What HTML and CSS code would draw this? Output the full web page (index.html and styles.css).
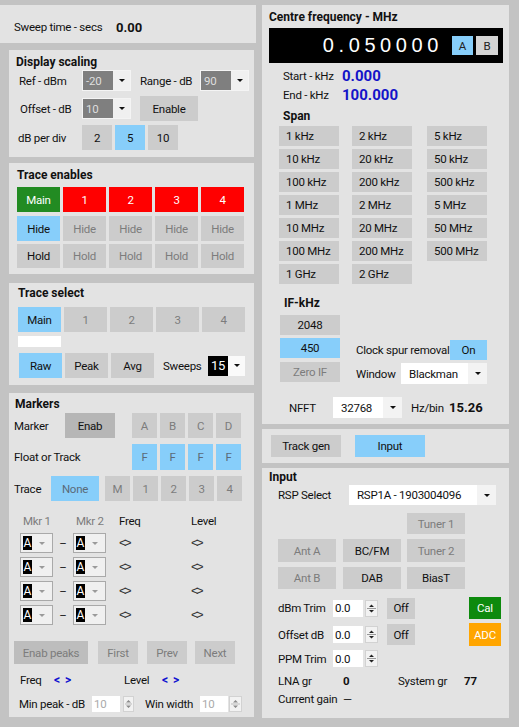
FILE: index.html
```html
<!DOCTYPE html>
<html>
<head>
<meta charset="utf-8">
<link rel="stylesheet" href="styles.css">
</head>
<body>
<div class="app">
  <div class="col left">
    <section class="panel sweep">
      <span class="lbl sweeplbl">Sweep time - secs</span><b class="sweepval">0.00</b>
    </section>

    <section class="panel sub disp">
      <div class="title">Display scaling</div>
      <div class="row d1">
        <span class="lbl w63">Ref - dBm</span>
        <span class="dd dark"><span class="ddtxt">-20</span><span class="ddbtn"><i class="arr"></i></span></span>
        <span class="lbl rng">Range - dB</span>
        <span class="dd dark"><span class="ddtxt">90</span><span class="ddbtn"><i class="arr"></i></span></span>
      </div>
      <div class="row d2">
        <span class="lbl w62">Offset - dB</span>
        <span class="dd dark"><span class="ddtxt">10</span><span class="ddbtn"><i class="arr"></i></span></span>
        <span class="btn enable">Enable</span>
      </div>
      <div class="row d3">
        <span class="lbl w64">dB per div</span>
        <span class="btn b30">2</span>
        <span class="btn b30 blue">5</span>
        <span class="btn b30">10</span>
      </div>
    </section>

    <section class="panel sub tenab">
      <div class="title">Trace enables</div>
      <div class="row trow">
        <span class="btn b43 green">Main</span>
        <span class="btn b43 red">1</span>
        <span class="btn b43 red">2</span>
        <span class="btn b43 red">3</span>
        <span class="btn b43 red">4</span>
      </div>
      <div class="row trow">
        <span class="btn b43 blue">Hide</span>
        <span class="btn b43 dis">Hide</span>
        <span class="btn b43 dis">Hide</span>
        <span class="btn b43 dis">Hide</span>
        <span class="btn b43 dis">Hide</span>
      </div>
      <div class="row trow">
        <span class="btn b43">Hold</span>
        <span class="btn b43 dis">Hold</span>
        <span class="btn b43 dis">Hold</span>
        <span class="btn b43 dis">Hold</span>
        <span class="btn b43 dis">Hold</span>
      </div>
    </section>

    <section class="panel sub tsel">
      <div class="title">Trace select</div>
      <div class="row srow">
        <span class="btn b43 blue">Main</span>
        <span class="btn b43 dis">1</span>
        <span class="btn b43 dis">2</span>
        <span class="btn b43 dis">3</span>
        <span class="btn b43 dis">4</span>
      </div>
      <div class="whitebox"></div>
      <div class="row rrow">
        <span class="btn b43 blue">Raw</span>
        <span class="btn b43">Peak</span>
        <span class="btn b43">Avg</span>
        <span class="lbl sweeps">Sweeps</span>
        <span class="dd blk"><span class="ddtxt">15</span><span class="ddbtn"><i class="arr"></i></span></span>
      </div>
    </section>

    <section class="panel sub mk">
      <div class="title">Markers</div>
      <div class="row m1">
        <span class="lbl w51">Marker</span>
        <span class="btn enab">Enab</span>
        <span class="btn b25 dis first">A</span>
        <span class="btn b25 dis">B</span>
        <span class="btn b25 dis">C</span>
        <span class="btn b25 dis">D</span>
      </div>
      <div class="row m2">
        <span class="lbl w118">Float or Track</span>
        <span class="btn b25 blue dis">F</span>
        <span class="btn b25 blue dis">F</span>
        <span class="btn b25 blue dis">F</span>
        <span class="btn b25 blue dis">F</span>
      </div>
      <div class="row m3">
        <span class="lbl w37">Trace</span>
        <span class="btn none blue dis">None</span>
        <span class="btn b25 dis mm">M</span>
        <span class="btn b25 dis">1</span>
        <span class="btn b25 dis">2</span>
        <span class="btn b25 dis">3</span>
        <span class="btn b25 dis">4</span>
      </div>
      <div class="row mhead">
        <span class="h1 dis">Mkr 1</span>
        <span class="h2 dis">Mkr 2</span>
        <span class="h3">Freq</span>
        <span class="h4">Level</span>
      </div>
      <div class="row mrow">
        <span class="mdd"><span class="mdtxt">A</span><i class="arr g"></i></span>
        <span class="dash">&ndash;</span>
        <span class="mdd"><span class="mdtxt">A</span><i class="arr g"></i></span>
        <span class="dia c1">&lt;&gt;</span>
        <span class="dia">&lt;&gt;</span>
      </div>
      <div class="row mrow">
        <span class="mdd"><span class="mdtxt">A</span><i class="arr g"></i></span>
        <span class="dash">&ndash;</span>
        <span class="mdd"><span class="mdtxt">A</span><i class="arr g"></i></span>
        <span class="dia c1">&lt;&gt;</span>
        <span class="dia">&lt;&gt;</span>
      </div>
      <div class="row mrow">
        <span class="mdd"><span class="mdtxt">A</span><i class="arr g"></i></span>
        <span class="dash">&ndash;</span>
        <span class="mdd"><span class="mdtxt">A</span><i class="arr g"></i></span>
        <span class="dia c1">&lt;&gt;</span>
        <span class="dia">&lt;&gt;</span>
      </div>
      <div class="row mrow">
        <span class="mdd"><span class="mdtxt">A</span><i class="arr g"></i></span>
        <span class="dash">&ndash;</span>
        <span class="mdd"><span class="mdtxt">A</span><i class="arr g"></i></span>
        <span class="dia c1">&lt;&gt;</span>
        <span class="dia">&lt;&gt;</span>
      </div>
      <div class="row prow">
        <span class="btn dark2 dis ep">Enab peaks</span>
        <span class="btn dis b40 pf">First</span>
        <span class="btn dis b40 pp">Prev</span>
        <span class="btn dis b40 pn">Next</span>
      </div>
      <div class="row frow">
        <span class="lbl w34">Freq</span>
        <span class="blu w70">&lt; &gt;</span>
        <span class="lbl w38">Level</span>
        <span class="blu">&lt; &gt;</span>
      </div>
      <div class="row minrow">
        <span class="lbl w73">Min peak - dB</span>
        <span class="num lt w28">10</span>
        <span class="spin s11"><svg width="9" height="14" viewBox="0 0 9 14"><path d="M2 5.5 L4.5 3 L7 5.5 Z M2 8.5 L4.5 11 L7 8.5 Z" fill="#8a8a8a"/><line x1="1" y1="7" x2="8" y2="7" stroke="#bbb"/></svg></span>
        <span class="lbl w55">Win width</span>
        <span class="num lt w28">10</span>
        <span class="spin s13"><svg width="11" height="14" viewBox="0 0 11 14"><path d="M3 5.5 L5.5 3 L8 5.5 Z M3 8.5 L5.5 11 L8 8.5 Z" fill="#8a8a8a"/><line x1="1" y1="7" x2="10" y2="7" stroke="#bbb"/></svg></span>
      </div>
    </section>
  </div>

  <div class="col right">
    <section class="panel cf">
      <div class="title">Centre frequency - MHz</div>
      <div class="freqbox">
        <span class="freq">0.050000</span>
        <span class="ab blue">A</span>
        <span class="ab bb">B</span>
      </div>
      <div class="row se">
        <span class="lbl w59">Start - kHz</span><b class="bval">0.000</b>
      </div>
      <div class="row se">
        <span class="lbl w59">End - kHz</span><b class="bval">100.000</b>
      </div>
      <div class="title span">Span</div>
      <div class="spangrid">
        <span class="sb">1 kHz</span><span class="sb">2 kHz</span><span class="sb">5 kHz</span>
        <span class="sb">10 kHz</span><span class="sb">20 kHz</span><span class="sb">50 kHz</span>
        <span class="sb blue">100 kHz</span><span class="sb">200 kHz</span><span class="sb">500 kHz</span>
        <span class="sb">1 MHz</span><span class="sb">2 MHz</span><span class="sb">5 MHz</span>
        <span class="sb">10 MHz</span><span class="sb">20 MHz</span><span class="sb">50 MHz</span>
        <span class="sb">100 MHz</span><span class="sb">200 MHz</span><span class="sb">500 MHz</span>
        <span class="sb">1 GHz</span><span class="sb">2 GHz</span>
      </div>
      <div class="title ifk">IF-kHz</div>
      <div class="ifblock">
        <div class="ifcol">
          <span class="btn ifb">2048</span>
          <span class="btn ifb blue i2">450</span>
          <span class="btn ifb dis i3">Zero IF</span>
        </div>
        <div class="ifright">
          <div class="row csr">
            <span class="lbl w94">Clock spur removal</span>
            <span class="btn on blue">On</span>
          </div>
          <div class="row win">
            <span class="lbl w45">Window</span>
            <span class="dd wht w86"><span class="ddtxt">Blackman</span><span class="ddbtn"><i class="arr"></i></span></span>
          </div>
        </div>
      </div>
      <div class="row nfft">
        <span class="lbl w44">NFFT</span>
        <span class="dd wht w69"><span class="ddtxt">32768</span><span class="ddbtn"><i class="arr"></i></span></span>
        <span class="lbl hzb">Hz/bin</span>
        <b class="bold13">15.26</b>
      </div>
    </section>

    <section class="panel tg">
      <span class="btn tgb">Track gen</span>
      <span class="btn tgb blue inp">Input</span>
    </section>

    <section class="panel inpanel">
      <div class="title">Input</div>
      <div class="row rsp">
        <span class="lbl w71">RSP Select</span>
        <span class="dd wht w147"><span class="ddtxt">RSP1A - 1903004096</span><span class="ddbtn"><i class="arr"></i></span></span>
      </div>
      <div class="row t1">
        <span class="btn b58 dis">Tuner 1</span>
      </div>
      <div class="row arow">
        <span class="btn b58 dis">Ant A</span>
        <span class="btn b58 g7">BC/FM</span>
        <span class="btn b58 dis g6">Tuner 2</span>
      </div>
      <div class="row brow">
        <span class="btn b58 dis">Ant B</span>
        <span class="btn b58 g7">DAB</span>
        <span class="btn b58 g6">BiasT</span>
      </div>
      <div class="row trim tr1">
        <span class="lbl w55">dBm Trim</span>
        <span class="num w30">0.0</span>
        <span class="spin s13b"><svg width="11" height="15" viewBox="0 0 11 15"><path d="M3 6 L5.5 3.5 L8 6 Z M3 9 L5.5 11.5 L8 9 Z" fill="#222"/><line x1="1" y1="7.5" x2="10" y2="7.5" stroke="#999"/></svg></span>
        <span class="btn off">Off</span>
        <span class="btn cal">Cal</span>
      </div>
      <div class="row trim tr2">
        <span class="lbl w55">Offset dB</span>
        <span class="num w30">0.0</span>
        <span class="spin s13b"><svg width="11" height="15" viewBox="0 0 11 15"><path d="M3 6 L5.5 3.5 L8 6 Z M3 9 L5.5 11.5 L8 9 Z" fill="#222"/><line x1="1" y1="7.5" x2="10" y2="7.5" stroke="#999"/></svg></span>
        <span class="btn off">Off</span>
        <span class="btn adc">ADC</span>
      </div>
      <div class="row trim tr3">
        <span class="lbl w55">PPM Trim</span>
        <span class="num w30">0.0</span>
        <span class="spin s13b"><svg width="11" height="15" viewBox="0 0 11 15"><path d="M3 6 L5.5 3.5 L8 6 Z M3 9 L5.5 11.5 L8 9 Z" fill="#222"/><line x1="1" y1="7.5" x2="10" y2="7.5" stroke="#999"/></svg></span>
      </div>
      <div class="row lna">
        <span class="lbl w65">LNA gr</span>
        <b class="w55b">0</b>
        <span class="lbl w66">System gr</span>
        <b>77</b>
      </div>
      <div class="row cg">
        <span class="lbl w65">Current gain</span>
        <span>&mdash;</span>
      </div>
    </section>
  </div>
</div>
</body>
</html>
```

FILE: styles.css
```css
* { box-sizing: border-box; }
html, body { margin: 0; padding: 0; }
body {
  width: 519px;
  height: 727px;
  background: #c3c3c3;
  font-family: Roboto, "Liberation Sans", Arial, sans-serif;
  font-size: 11.5px;
  letter-spacing: -0.25px;
  color: #111;
  overflow: hidden;
}
.app {
  display: grid;
  grid-template-columns: 256px 247px;
  column-gap: 6px;
  padding-top: 5px;
}
.col { display: flex; flex-direction: column; }
.panel { background: #e3e3e3; }
.sub { margin-left: 9px; width: 245px; }
.row { display: flex; align-items: center; }
.lbl { white-space: nowrap; flex: none; }
.title { font-weight: bold; height: 14px; line-height: 14px; font-size: 12px; letter-spacing: 0; }
b { font-weight: bold; letter-spacing: 0; }

.btn {
  display: flex; align-items: center; justify-content: center;
  background: #cccccc; color: #111; flex: none; white-space: nowrap;
}
.dis { color: #7c7c7c; }
.blue { background: #87cefa; }
.blue.dis { color: #5a6a78; }
.green { background: #228b22; color: #fff; }
.red { background: #ff0000; color: #fff; }

/* sweep */
.sweep { height: 38px; display: flex; align-items: center; padding: 6px 0 0 14px; }
.sweepval { margin-left: 17px; font-size: 13px; }
.sweeplbl { width: 85px; }

/* dropdowns */
.dd { display: flex; height: 21px; border: 1px solid #f4f4f4; flex: none; }
.dd .ddtxt { flex: 1; display: flex; align-items: center; padding-left: 3px; overflow: hidden; white-space: nowrap; }
.dd .ddbtn { width: 17px; background: #f0f0f0; display: flex; align-items: center; justify-content: center; flex: none; }
.arr { display: block; width: 0; height: 0; border-left: 3px solid transparent; border-right: 3px solid transparent; border-top: 3px solid #111; }
.arr.g { border-top-color: #9a9a9a; }
.dd.dark { width: 49px; }
.dd.dark .ddtxt { background: #7f7f7f; color: #dedede; }
.dd.blk { width: 37px; height: 20px; border: none; }
.dd.blk .ddtxt { background: #000; color: #fff; flex: none; width: 20px; padding-left: 3px; font-size: 13px; }
.dd.blk .ddbtn { background: #fafafa; }
.dd.wht { border: none; background: #fff; }
.dd.wht .ddtxt { padding-left: 8px; }
.dd.wht .ddbtn { background: #f3f3f3; width: 19px; }
.w86 { width: 86px; } .w69 { width: 69px; } .w147 { width: 147px; }

/* display scaling */
.disp { height: 107px; padding: 5px 0 0 7px; margin-top: 7px; }
.d1 { margin-top: 1px; height: 21px; padding-left: 3px; }
.w63 { width: 63px; }
.rng { margin-left: 9px; width: 60px; }
.d2 { margin-top: 5px; height: 25px; padding-left: 4px; }
.w62 { width: 62px; }
.enable { width: 58px; height: 25px; margin-left: 9px; }
.d3 { margin-top: 4px; height: 25px; padding-left: 2px; gap: 3px; }
.w64 { width: 64px; margin-right: -3px; }
.b30 { width: 30px; height: 25px; }

/* trace enables */
.tenab { height: 111px; margin-top: 6px; padding: 5px 0 0 8px; }
.trow { gap: 3px; height: 25px; margin-top: 4px; }
.trow:nth-of-type(2) { margin-top: 5px; }
.trow:last-child { margin-top: 3px; height: 24px; }
.trow:last-child .btn { height: 24px; }
.b43 { width: 43px; height: 25px; }

/* trace select */
.tsel { height: 102px; margin-top: 9px; padding: 3px 0 0 9px; }
.srow { gap: 3px; margin-top: 7px; }
.whitebox { width: 43px; height: 11px; background: #fff; margin-top: 4px; }
.rrow { gap: 3px; margin-top: 6px; padding-left: 1px; }
.sweeps { margin-left: 6px; width: 42px; }

/* markers */
.mk { height: 324px; margin-top: 8px; padding: 4px 0 0 5px; }
.mk .title { padding-left: 1px; }
.m1 { margin-top: 2px; height: 25px; }
.w51 { width: 51px; }
.enab { width: 50px; height: 25px; background: #b6b6b6; }
.b25 { width: 25px; height: 25px; margin-left: 3px; }
.m1 .first { margin-left: 17px; }
.m2 { margin-top: 6px; height: 26px; }
.m2 .b25 { height: 26px; }
.w118 { width: 115px; }
.m3 { margin-top: 6px; height: 25px; }
.w37 { width: 37px; }
.none { width: 48px; height: 25px; }
.m3 .mm { margin-left: 6px; }
.mhead { margin-top: 13px; height: 14px; padding-left: 9px; }
.h1 { width: 53px; } .h2 { width: 43px; } .h3 { width: 72px; }
.mrow { height: 20px; margin-top: 4px; padding-left: 6px; }
.mhead + .mrow { margin-top: 5px; }
.mdd { width: 33px; height: 20px; border: 1px solid #a9a9a9; background: #f0f0f0; display: flex; align-items: center; padding-left: 2px; flex: none; }
.mdtxt { background: #000; color: #fff; width: 9px; height: 14px; line-height: 14px; font-size: 12px; text-align: center; margin-right: 7px; letter-spacing: 0; }
.dash { width: 20px; text-align: center; }
.dia { font-family: "Liberation Sans", Arial, sans-serif; font-size: 13px; letter-spacing: -2.5px; color: #333; line-height: 14px; }
.c1 { margin-left: 13px; width: 72px; }
.prow { margin-top: 16px; height: 23px; }
.prow .btn { height: 23px; }
.dark2 { background: #bdbdbd; }
.ep { width: 74px; }
.b40 { width: 40px; }
.pf { margin-left: 10px; } .pp { margin-left: 9px; } .pn { margin-left: 8px; }
.frow { margin-top: 9px; height: 14px; padding-left: 6px; }
.w34 { width: 34px; } .w70 { width: 70px; } .w38 { width: 38px; }
.blu { color: #1010d0; font-weight: bold; font-size: 12px; letter-spacing: 1px; }
.minrow { margin-top: 9px; height: 16px; padding-left: 5px; }
.w73 { width: 73px; } .w55 { width: 55px; }
.num { background: #fff; height: 16px; display: flex; align-items: center; padding-left: 2px; flex: none; }
.num.lt { color: #aaa; }
.w28 { width: 28px; } .w30 { width: 30px; }
.spin { display: flex; align-items: center; justify-content: center; background: #f2f2f2; border: 1px solid #d2d2d2; height: 16px; flex: none; }
.s11 { width: 11px; margin-left: 3px; margin-right: 11px; }
.s13 { width: 13px; margin-left: 1px; }

/* centre freq */
.cf { height: 419px; padding: 5px 6px 0 7px; }
.freqbox { margin-top: 4px; height: 35px; background: #000; display: flex; align-items: center; justify-content: flex-end; padding-right: 5px; }
.freq { color: #fff; font-family: "Liberation Sans", Arial, sans-serif; font-size: 20px; letter-spacing: 4.6px; margin-right: 9px; }
.ab { width: 21px; height: 19px; display: flex; align-items: center; justify-content: center; color: #222; }
.bb { background: #d4d4d4; margin-left: 3px; width: 22px; }
.se { margin-top: 6px; height: 14px; padding-left: 14px; }
.se + .se { margin-top: 5px; }
.w59 { width: 59px; }
.bval { color: #1414c8; font-size: 15px; }
.span { margin-top: 7px; padding-left: 14px; }
.spangrid { margin-top: 3px; margin-left: 10px; display: grid; grid-template-columns: 73px 75px 60px; row-gap: 3px; }
.sb { width: 60px; height: 20px; background: #cccccc; display: flex; align-items: center; padding-left: 7px; }
.ifk { margin-top: 12px; padding-left: 15px; }
.ifblock { display: flex; margin-top: 5px; align-items: flex-start; }
.ifcol { margin-left: 11px; display: flex; flex-direction: column; }
.ifb { width: 60px; height: 20px; }
.i2 { margin-top: 3px; } .i3 { margin-top: 4px; }
.ifright { margin-left: 16px; margin-top: 25px; }
.csr { height: 20px; }
.w94 { width: 94px; }
.on { width: 37px; height: 20px; }
.win { margin-top: 3px; height: 21px; }
.win .dd { height: 21px; }
.w45 { width: 45px; }
.nfft { margin-top: 13px; height: 21px; padding-left: 20px; }
.w44 { width: 44px; }
.nfft .dd { height: 21px; }
.hzb { margin-left: 9px; width: 38px; }
.bold13 { font-size: 13px; }

/* track gen */
.tg { height: 34px; margin-top: 5px; display: flex; align-items: flex-start; padding: 6px 0 0 9px; }
.tgb { width: 70px; height: 22px; }
.inp { margin-left: 14px; }

/* input */
.inpanel { height: 250px; margin-top: 5px; padding: 2px 8px 0 7px; }
.rsp { margin-top: 1px; height: 20px; padding-left: 9px; }
.w71 { width: 71px; }
.rsp .dd { height: 20px; }
.t1 { margin-top: 8px; padding-left: 138px; }
.t1 .btn { height: 21px; }
.b58 { width: 58px; }
.arow { margin-top: 5px; padding-left: 9px; }
.arow .btn { height: 23px; }
.brow { margin-top: 5px; padding-left: 9px; }
.brow .btn { height: 22px; }
.g7 { margin-left: 7px; } .g6 { margin-left: 6px; }
.trim { padding-left: 9px; }
.tr1 { margin-top: 8px; height: 22px; }
.tr2 { margin-top: 4px; height: 23px; }
.tr3 { margin-top: 4px; height: 17px; }
.trim .num { height: 17px; }
.s13b { width: 13px; height: 17px; margin-left: 2px; }
.off { width: 28px; height: 21px; margin-left: 9px; }
.cal { margin-left: auto; width: 32px; height: 22px; background: #0d8a0d; color: #fff; }
.adc { margin-left: auto; width: 32px; height: 23px; background: #ffa500; color: #fff; }
.lna { margin-top: 7px; height: 14px; padding-left: 9px; }
.w65 { width: 65px; }
.w55b { width: 55px; }
.w66 { width: 66px; }
.cg { margin-top: 4px; height: 14px; padding-left: 9px; }
```
